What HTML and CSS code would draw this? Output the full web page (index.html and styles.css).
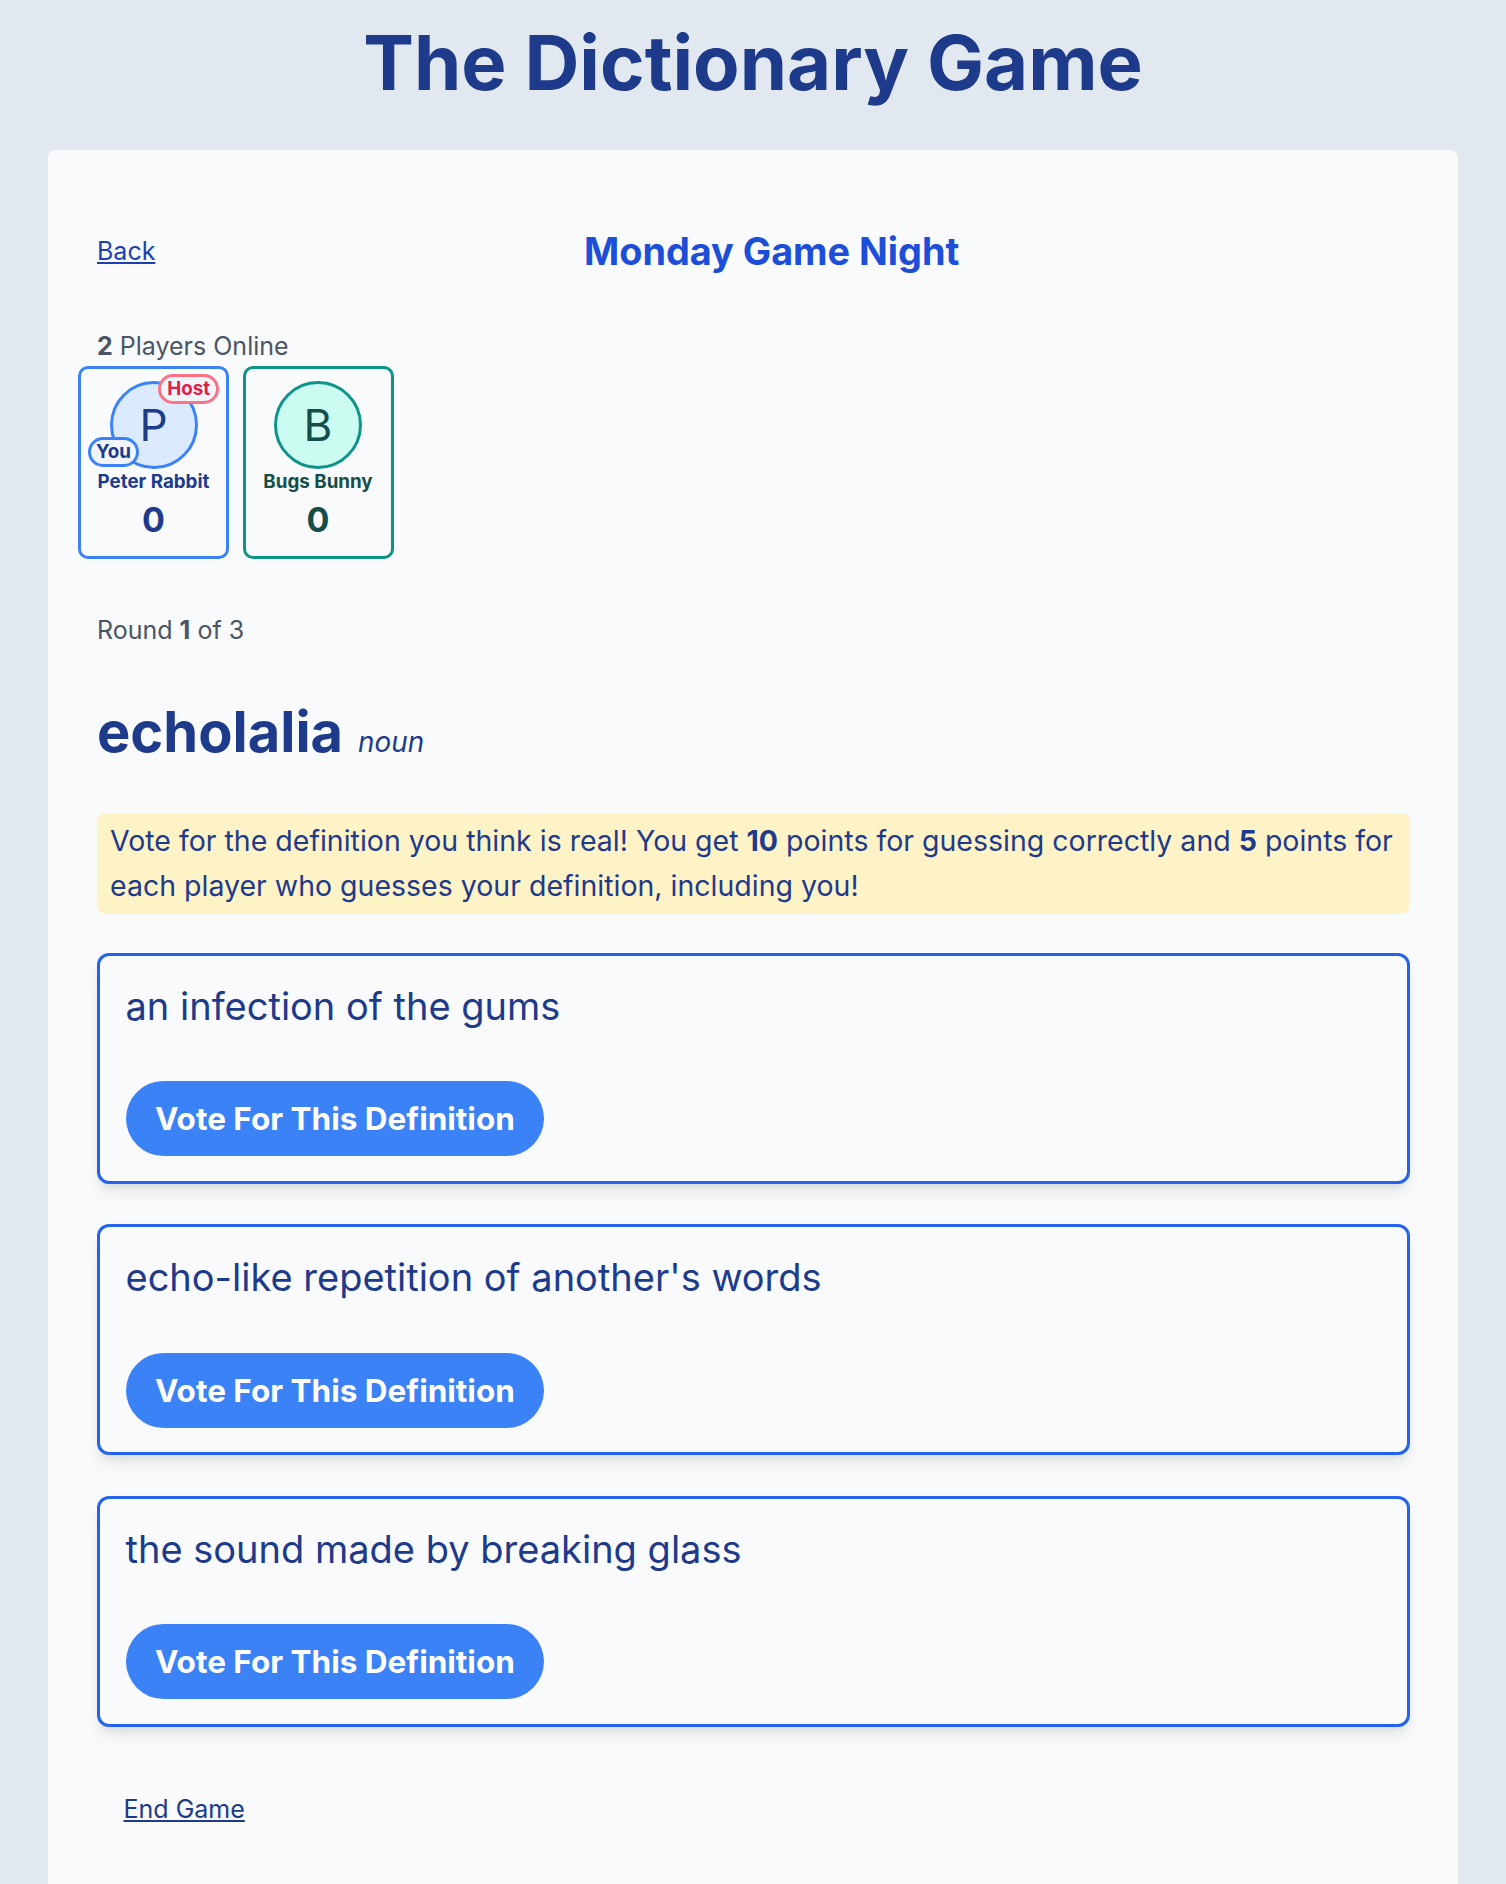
FILE: index.html
```html
<!DOCTYPE html>
<html lang="en">
<head>
<meta charset="utf-8">
<title>The Dictionary Game</title>
<link rel="stylesheet" href="styles.css">
</head>
<body>
<h1 class="site-title">The Dictionary Game</h1>
<main class="panel">
  <div class="header">
    <a class="back" href="#">Back</a>
    <h2 class="room-title">Monday Game Night</h2>
  </div>

  <div class="online"><b>2</b> Players Online</div>
  <div class="players">
    <div class="player player-blue">
      <div class="avatar avatar-blue">P</div>
      <span class="badge badge-host">Host</span>
      <span class="badge badge-you">You</span>
      <div class="name">Peter Rabbit</div>
      <div class="score">0</div>
    </div>
    <div class="player player-teal">
      <div class="avatar avatar-teal">B</div>
      <div class="name">Bugs Bunny</div>
      <div class="score">0</div>
    </div>
  </div>

  <div class="round">Round <b>1</b> of 3</div>

  <h3 class="word">echolalia<span class="pos">noun</span></h3>

  <p class="info">Vote for the definition you think is real! You get <b>10</b> points for guessing correctly and <b>5</b> points for each player who guesses your definition, including you!</p>

  <div class="defs">
    <div class="def">
      <p class="def-text">an infection of the gums</p>
      <button class="vote" type="button">Vote For This Definition</button>
    </div>
    <div class="def">
      <p class="def-text">echo-like repetition of another's words</p>
      <button class="vote" type="button">Vote For This Definition</button>
    </div>
    <div class="def">
      <p class="def-text">the sound made by breaking glass</p>
      <button class="vote" type="button">Vote For This Definition</button>
    </div>
  </div>

  <a class="end" href="#">End Game</a>
</main>
</body>
</html>
```
FILE: styles.css
```css
body {
  margin: 0;
  padding: 25px 48px 0;
  background: #e2e8f0;
  font-family: Inter, "Noto Sans", sans-serif;
  color: #1e3a8a;
}

.site-title {
  margin: 0 0 50px;
  font-size: 76px;
  line-height: 75px;
  font-weight: 700;
  text-align: center;
  color: #1e3a8a;
}

.panel {
  display: block;
  background: #f8fafc;
  border-radius: 8px 8px 0 0;
  padding: 48px 48px 160px 49px;
}

.header {
  display: flex;
  align-items: center;
  height: 45px;
  margin-top: 31px;
}

.back {
  font-size: 25px;
  line-height: 35px;
  color: #1e40af;
  text-decoration: underline;
}

.room-title {
  flex: 1;
  margin: 0;
  padding-right: 22px;
  text-align: center;
  font-size: 37.8px;
  line-height: 45px;
  font-weight: 700;
  color: #1d4ed8;
}

.online {
  margin-top: 54px;
  font-size: 25px;
  line-height: 37.5px;
  color: #4b5563;
}

.players {
  display: flex;
  gap: 13.5px;
  margin: 0.5px 0 0 -19px;
}

.player {
  position: relative;
  width: 151px;
  box-sizing: border-box;
  border: 3px solid;
  border-radius: 10px;
  padding: 12px 4px 14px;
  display: flex;
  flex-direction: column;
  align-items: center;
}

.player-blue { border-color: #3b82f6; color: #1e3a8a; }
.player-teal { border-color: #0d9488; color: #134e4a; }

.avatar {
  width: 88px;
  height: 88px;
  box-sizing: border-box;
  border: 3px solid;
  border-radius: 50%;
  display: flex;
  align-items: center;
  justify-content: center;
  font-size: 44px;
  line-height: 1;
}

.avatar-blue { background: #dbeafe; border-color: #3b82f6; color: #1e3a8a; }
.avatar-teal { background: #ccfbf1; border-color: #0d9488; color: #134e4a; }

.name {
  font-size: 18.75px;
  line-height: 25px;
  font-weight: 700;
  white-space: nowrap;
}

.score {
  margin-top: 3px;
  font-size: 34px;
  line-height: 45px;
  font-weight: 700;
}

.badge {
  position: absolute;
  border: 3px solid;
  border-radius: 999px;
  background: #f1f5f9;
  padding: 0 6px;
  font-size: 18.75px;
  line-height: 24px;
  font-weight: 700;
}

.badge-host {
  top: 5px;
  right: 7px;
  border-color: #fb7185;
  color: #e11d48;
}

.badge-you {
  top: 68px;
  left: 7px;
  border-color: #3b82f6;
  color: #1e3a8a;
  padding: 0 5px;
}

.round {
  margin-top: 52.5px;
  font-size: 25px;
  line-height: 37.5px;
  color: #4b5563;
}

.word {
  margin: 52.5px 0 0;
  font-size: 56px;
  line-height: 60px;
  font-weight: 700;
  color: #1e3a8a;
}

.pos {
  margin-left: 15px;
  font-size: 27.8px;
  line-height: 1;
  font-style: italic;
  font-weight: 400;
}

.info {
  margin: 51.5px 0 0;
  background: #fef3c7;
  border-radius: 8px;
  padding: 4.5px 13px 5.5px;
  font-size: 28.5px;
  line-height: 45.6px;
  color: #1e3a8a;
}

.defs {
  margin-top: 38.5px;
  display: flex;
  flex-direction: column;
  gap: 40.5px;
}

.def {
  background: #f8fafc;
  border: 3px solid #2563eb;
  border-radius: 12px;
  padding: 24px 25.5px 24.5px;
  box-shadow: 0 10px 15px -3px rgba(0, 0, 0, 0.1), 0 4px 6px -4px rgba(0, 0, 0, 0.1);
}

.def-text {
  margin: 0 0 49px;
  font-size: 38px;
  line-height: 52.5px;
  color: #1e3a8a;
}

.vote {
  display: block;
  height: 75px;
  padding: 0 29.5px;
  border: 0;
  border-radius: 999px;
  background: #3b82f6;
  color: #ffffff;
  font-family: inherit;
  font-size: 31.5px;
  line-height: 75px;
  font-weight: 700;
  cursor: pointer;
}

.end {
  display: inline-block;
  margin: 64.5px 0 0 26.5px;
  font-size: 25px;
  line-height: 37.5px;
  color: #1e3a8a;
  text-decoration: underline;
}
```
